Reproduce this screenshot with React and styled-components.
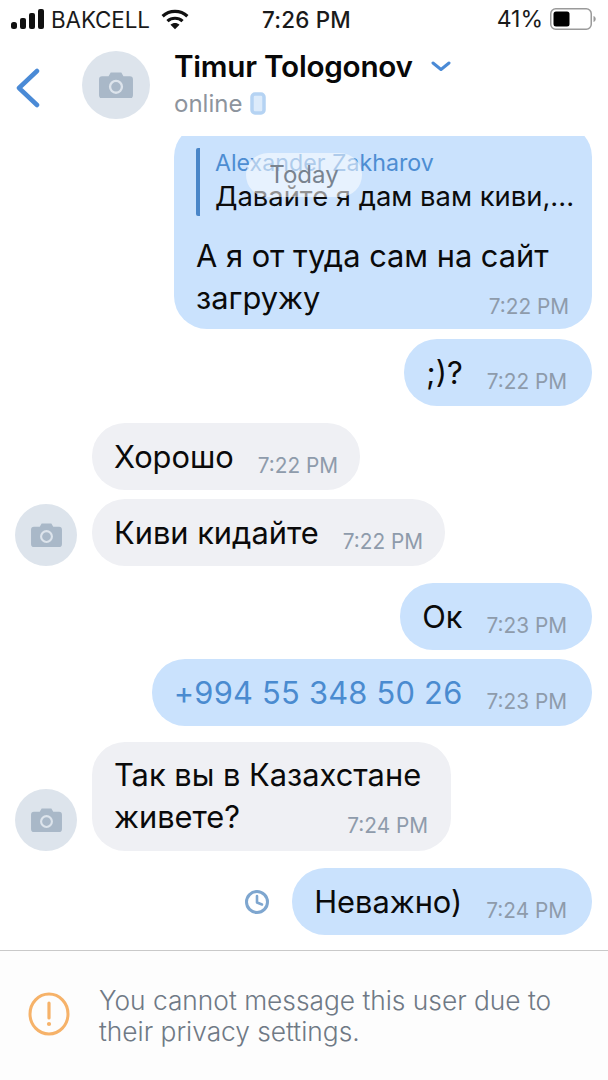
import { createGlobalStyle, styled } from "styled-components";

const GlobalStyle = createGlobalStyle`
  html, body {
    margin: 0;
    padding: 0;
    background: #fff;
  }
  body {
    font-family: Inter, "Noto Sans", "Liberation Sans", sans-serif;
    color: #0a0a0a;
  }
`;

const Screen = styled.div`
  width: 608px;
  height: 1080px;
  overflow: hidden;
  display: flex;
  flex-direction: column;
  background: #fff;
`;

const StatusBar = styled.div`
  height: 40px;
  flex: none;
  box-sizing: border-box;
  display: grid;
  grid-template-columns: 1fr auto 1fr;
  align-items: center;
  padding: 0 12px 2px 11px;
  font-size: 23px;
  color: #1a1a1a;
`;
const StatusLeft = styled.div`
  display: flex;
  align-items: center;
`;
const Carrier = styled.span`
  font-size: 22.4px;
  font-weight: 400;
  letter-spacing: -0.1px;
  margin: 0 11px 0 6px;
`;
const Clock = styled.span`
  font-size: 22.4px;
  font-weight: 500;
  letter-spacing: 0.2px;
  margin-left: 6px;
`;
const StatusRight = styled.div`
  display: flex;
  align-items: center;
  justify-content: flex-end;
  gap: 7px;
`;

const Header = styled.header`
  height: 96px;
  flex: none;
  box-sizing: border-box;
  display: flex;
  align-items: flex-start;
  padding: 11px 0 0 15px;
  background: #fff;
`;
const BackButton = styled.div`
  width: 27px;
  height: 40px;
  margin: 17px 40px 0 0;
`;
const Avatar = styled.div`
  width: ${(p) => p.$size}px;
  height: ${(p) => p.$size}px;
  flex: none;
  border-radius: 50%;
  background: #dde4ec;
  display: flex;
  align-items: center;
  justify-content: center;
`;
const HeaderText = styled.div`
  margin: -3px 0 0 24px;
  display: flex;
  flex-direction: column;
`;
const NameRow = styled.div`
  display: flex;
  align-items: center;
  gap: 18px;
  height: 36px;
`;
const Name = styled.span`
  font-size: 29.7px;
  font-weight: 600;
  letter-spacing: -0.25px;
  color: #080808;
`;
const OnlineRow = styled.div`
  display: flex;
  align-items: center;
  gap: 8px;
  height: 30px;
  margin-top: 4px;
  font-size: 24px;
  color: #8d949d;
`;

const Chat = styled.main`
  flex: 1;
  min-height: 0;
  overflow: hidden;
  position: relative;
  display: flex;
  flex-direction: column;
  padding: 0 16px 0 15px;
`;
const Row = styled.div`
  display: flex;
  align-items: center;
  justify-content: ${(p) => (p.$out ? "flex-end" : "flex-start")};
  margin-top: ${(p) => p.$gap}px;
  min-height: 0;
`;
const RowIn = styled(Row)`
  align-items: flex-end;
  padding-left: ${(p) => (p.$avatar ? 0 : 77)}px;
  gap: 15px;
`;
const Bubble = styled.div`
  box-sizing: border-box;
  width: ${(p) => (p.$width ? `${p.$width}px` : "auto")};
  background: ${(p) => (p.$out ? "#cae2fd" : "#eff0f4")};
  border-radius: 33px;
  padding: ${(p) => p.$pad || (p.$out ? "0 25px 0 22px" : "0 22px")};
  min-height: 67px;
  font-size: 30.8px;
  line-height: 42px;
  display: flex;
  flex-direction: column;
  justify-content: center;
`;
const TopBubble = styled(Bubble)`
  margin-top: -12px;
  padding: 24px 23px 10px 22px;
`;
const Line = styled.div`
  display: flex;
  justify-content: space-between;
  align-items: center;
  white-space: nowrap;
  gap: ${(p) => p.$gap || 24}px;
`;
const Phone = styled.span`
  color: #4a8bd0;
  letter-spacing: 0.25px;
`;
const Time = styled.span`
  flex: none;
  font-size: 20.8px;
  line-height: 24px;
  color: #8e9bab;
  position: relative;
  top: 9px;
`;
const Reply = styled.div`
  display: flex;
  flex-direction: column;
  border-left: 4px solid #4a86c8;
  border-radius: 2px;
  padding: 0 0 2px 15px;
  height: 68px;
  margin-bottom: 19px;
  box-sizing: border-box;
  justify-content: center;
  white-space: nowrap;
`;
const ReplyName = styled.span`
  font-size: 23.2px;
  line-height: 30px;
  color: #4d8dd2;
`;
const ReplyText = styled.span`
  font-size: 27.4px;
  line-height: 36px;
  color: #0c0c0c;
`;
const DatePill = styled.div`
  position: absolute;
  top: 17px;
  left: 246px;
  width: 116px;
  height: 44px;
  border-radius: 22px;
  background: rgba(255, 255, 255, 0.55);
  color: #78838f;
  font-size: 24px;
  line-height: 44px;
  text-align: center;
`;

const Footer = styled.footer`
  height: 130px;
  flex: none;
  box-sizing: border-box;
  border-top: 1px solid #c9c9c9;
  background: #fdfdfd;
  display: flex;
  align-items: flex-start;
  gap: 29px;
  padding: 34px 30px 0 28px;
`;
const Notice = styled.p`
  margin: 0;
  font-size: 26.3px;
  line-height: 31px;
  font-weight: 300;
  color: #6f7985;
`;

function CameraIcon({ size }) {
  return (
    <svg width={size} height={size * 0.78} viewBox="0 0 32 25" fill="none">
      <path
        d="M3 4h6l2-3.5h10L23 4h6a3 3 0 0 1 3 3v15a3 3 0 0 1-3 3H3a3 3 0 0 1-3-3V7a3 3 0 0 1 3-3z"
        fill="#a9b8c8"
      />
      <circle cx="16" cy="14" r="5.6" fill="none" stroke="#dde4ec" strokeWidth="2.2" />
    </svg>
  );
}

function Signal() {
  return (
    <svg width="34" height="22" viewBox="0 0 34 22">
      <rect x="0" y="14" width="6" height="7" rx="2.5" fill="#111" />
      <rect x="9" y="10" width="6" height="11" rx="2" fill="#111" />
      <rect x="18" y="5" width="6" height="16" rx="2" fill="#111" />
      <rect x="27" y="1" width="6" height="20" rx="2" fill="#111" />
    </svg>
  );
}

function Wifi() {
  return (
    <svg width="28" height="22" viewBox="0 0 26 20" fill="none" stroke="#111" strokeWidth="3">
      <path d="M1.5 7.5C8 1.5 18 1.5 24.5 7.5" />
      <path d="M6 12c4-3.6 10-3.6 14 0" />
      <path d="M13 19.5l-4.2-4.2c2.4-2 6-2 8.4 0z" fill="#111" stroke="none" />
    </svg>
  );
}

function Battery() {
  return (
    <svg width="46" height="22" viewBox="0 0 46 22">
      <rect x="0.75" y="0.75" width="40.5" height="20.5" rx="5" fill="none" stroke="#9a9a9a" strokeWidth="1.5" />
      <rect x="3.5" y="3.5" width="16" height="15" rx="2.5" fill="#000" />
      <path d="M43.5 8v6c1.5-.5 2.2-1.7 2.2-3s-.7-2.5-2.2-3z" fill="#9a9a9a" />
    </svg>
  );
}

function Message({ text, time, out, gap, phone }) {
  const body = phone ? <Phone>{text}</Phone> : <span>{text}</span>;
  return out ? (
    <Row $out $gap={gap}>
      <Bubble $out>
        <Line>
          {body}
          <Time>{time}</Time>
        </Line>
      </Bubble>
    </Row>
  ) : (
    <RowIn $gap={gap}>
      <Bubble>
        <Line>
          {body}
          <Time>{time}</Time>
        </Line>
      </Bubble>
    </RowIn>
  );
}

export default function App() {
  return (
    <Screen>
      <GlobalStyle />
      <StatusBar>
        <StatusLeft>
          <Signal />
          <Carrier>BAKCELL</Carrier>
          <Wifi />
        </StatusLeft>
        <Clock>7:26 PM</Clock>
        <StatusRight>
          <span>41%</span>
          <Battery />
        </StatusRight>
      </StatusBar>

      <Header>
        <BackButton>
          <svg width="27" height="40" viewBox="0 0 27 40" fill="none">
            <path d="M22 3L4 20l18 17" stroke="#4a8ad6" strokeWidth="4.5" strokeLinecap="round" strokeLinejoin="round" />
          </svg>
        </BackButton>
        <Avatar $size={68}>
          <CameraIcon size={34} />
        </Avatar>
        <HeaderText>
          <NameRow>
            <Name>Timur Tologonov</Name>
            <svg width="20" height="11" viewBox="0 0 20 11" fill="none">
              <path d="M2 2l8 6.5L18 2" stroke="#4a8ad6" strokeWidth="3" strokeLinecap="round" strokeLinejoin="round" />
            </svg>
          </NameRow>
          <OnlineRow>
            <span>online</span>
            <svg width="16" height="23" viewBox="0 0 16 23" fill="none">
              <rect x="2" y="2" width="12" height="19" rx="3" fill="#dcebfb" stroke="#b5d3f3" strokeWidth="3.5" />
            </svg>
          </OnlineRow>
        </HeaderText>
      </Header>

      <Chat>
        <Row $out $gap={0}>
          <TopBubble $out $width={418}>
            <Reply>
              <ReplyName>Alexander Zakharov</ReplyName>
              <ReplyText>Давайте я дам вам киви,...</ReplyText>
            </Reply>
            <Line>А я от туда сам на сайт</Line>
            <Line>
              <span>загружу</span>
              <Time>7:22 PM</Time>
            </Line>
          </TopBubble>
        </Row>
        <DatePill>Today</DatePill>

        <Message out gap={10} text=";)?" time="7:22 PM" />
        <Message gap={17} text="Хорошо" time="7:22 PM" />
        <RowIn $avatar $gap={9}>
          <Avatar $size={62}>
            <CameraIcon size={31} />
          </Avatar>
          <Bubble>
            <Line>
              <span>Киви кидайте</span>
              <Time>7:22 PM</Time>
            </Line>
          </Bubble>
        </RowIn>
        <Message out gap={17} text="Ок" time="7:23 PM" />
        <Message out phone gap={9} text="+994 55 348 50 26" time="7:23 PM" />
        <RowIn $avatar $gap={16}>
          <Avatar $size={62}>
            <CameraIcon size={31} />
          </Avatar>
          <Bubble $width={359} $pad="12px 23px 13px 22px">
            <Line>Так вы в Казахстане</Line>
            <Line>
              <span>живете?</span>
              <Time>7:24 PM</Time>
            </Line>
          </Bubble>
        </RowIn>
        <Row $out $gap={17}>
          <svg width="26" height="26" viewBox="0 0 26 26" fill="none" style={{ marginRight: 22 }}>
            <circle cx="13" cy="13" r="10.5" stroke="#7ea6cf" strokeWidth="3" />
            <path d="M13 7v6.5l5 2" stroke="#7ea6cf" strokeWidth="2.6" strokeLinecap="round" strokeLinejoin="round" />
          </svg>
          <Bubble $out>
            <Line>
              <span>Неважно)</span>
              <Time>7:24 PM</Time>
            </Line>
          </Bubble>
        </Row>
      </Chat>

      <Footer>
        <svg width="42" height="46" viewBox="0 0 42 46" fill="none" style={{ flex: "none", marginTop: 6 }}>
          <ellipse cx="21" cy="23" rx="19" ry="20" stroke="#f6b269" strokeWidth="3" />
          <path d="M21 12v15" stroke="#f6b269" strokeWidth="3.2" strokeLinecap="round" />
          <circle cx="21" cy="33" r="2.1" fill="#f6b269" />
        </svg>
        <Notice>You cannot message this user due to their privacy settings.</Notice>
      </Footer>
    </Screen>
  );
}
